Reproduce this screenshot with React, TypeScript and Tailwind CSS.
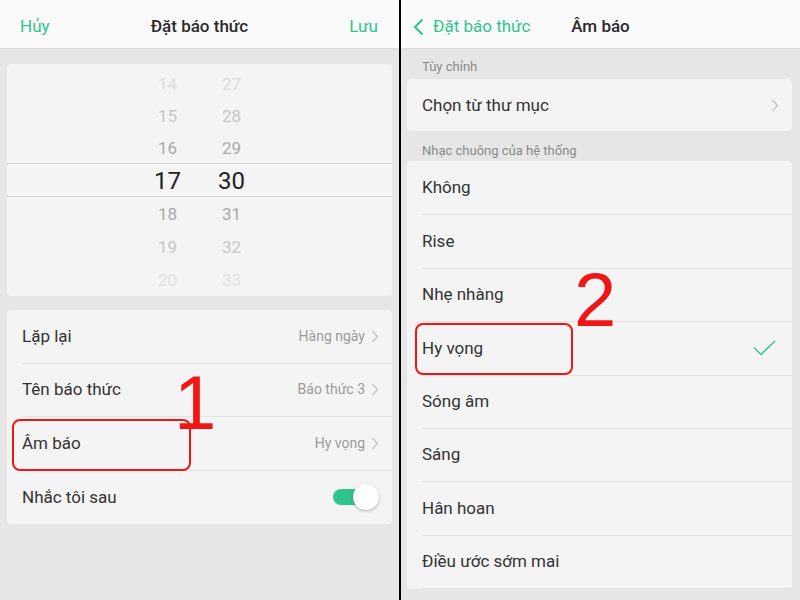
import React from 'react';

const GREEN = '#2fc48e';

const hours = [
  { h: '14', m: '27', c: 'h-[32px] pt-[3px] text-[17px] text-[#dcdcdc]' },
  { h: '15', m: '28', c: 'h-[32px] pt-[3px] text-[17px] text-[#c6c6c6]' },
  { h: '16', m: '29', c: 'h-[32px] pt-[3px] text-[17px] text-[#a9a9a9]' },
  { h: '17', m: '30', c: 'h-[34px] pt-[1px] text-[24px] text-[#222222] border-y border-[#d6d6d6]' },
  { h: '18', m: '31', c: 'h-[33px] pt-[3px] text-[17px] text-[#a9a9a9]' },
  { h: '19', m: '32', c: 'h-[33px] pt-[3px] text-[17px] text-[#c8c8c8]' },
  { h: '20', m: '33', c: 'h-[33px] pt-[3px] text-[17px] text-[#e2e2e2]' },
];

const settings = [
  { label: 'Lặp lại', value: 'Hàng ngày' },
  { label: 'Tên báo thức', value: 'Báo thức 3' },
  { label: 'Âm báo', value: 'Hy vọng' },
];

const tones = ['Không', 'Rise', 'Nhẹ nhàng', 'Hy vọng', 'Sóng âm', 'Sáng', 'Hân hoan', 'Điều ước sớm mai'];

function Chevron({ className = '' }: { className?: string }) {
  return (
    <svg width="8" height="13" viewBox="0 0 8 13" className={className}>
      <polyline points="1.5,1 6.5,6.5 1.5,12" fill="none" stroke="#c4c4c4" strokeWidth="1.3" />
    </svg>
  );
}

function Toggle() {
  return (
    <div className="relative w-[46px] h-[26px]">
      <div className="absolute left-0 top-[5px] w-[36px] h-[16px] rounded-full" style={{ background: GREEN }} />
      <div className="absolute right-0 top-0 w-[26px] h-[26px] rounded-full bg-white shadow-[0_1px_3px_rgba(0,0,0,0.3)]" />
    </div>
  );
}

function LeftPanel() {
  return (
    <div className="w-[399px] h-full flex flex-col bg-[#e6e6e6]">
      <div className="h-[49px] shrink-0 bg-[#fafafa] border-b border-[#dadada] flex items-center justify-between pl-[20px] pr-[21px] pt-[5px] text-[17px]">
        <span style={{ color: GREEN }}>Hủy</span>
        <span className="font-medium text-[#2a2a2a]">Đặt báo thức</span>
        <span style={{ color: GREEN }}>Lưu</span>
      </div>
      <div className="flex flex-col px-[7px] pt-[15px]">
        <div className="h-[232px] rounded-[4px] bg-[#f4f4f4] pt-[3px] overflow-hidden">
          {hours.map((r) => (
            <div key={r.h} className={'flex justify-center items-center ' + r.c}>
              <span className="w-16 text-center">{r.h}</span>
              <span className="w-16 text-center">{r.m}</span>
            </div>
          ))}
        </div>
        <div className="mt-[14px] rounded-[4px] bg-[#f4f4f4] pl-[15px]">
          {settings.map((s) => (
            <div key={s.label} className="h-[53.5px] flex items-center justify-between border-b border-[#e2e2e2] pr-[13px]">
              <span className="text-[17px] text-[#333]">{s.label}</span>
              <span className="flex items-center gap-[6px] text-[14px] text-[#9b9b9b]">
                {s.value}
                <Chevron />
              </span>
            </div>
          ))}
          <div className="h-[53.5px] flex items-center justify-between pr-[13px]">
            <span className="text-[17px] text-[#333]">Nhắc tôi sau</span>
            <Toggle />
          </div>
        </div>
      </div>
    </div>
  );
}

function RightPanel() {
  return (
    <div className="flex-1 h-full flex flex-col bg-[#e6e6e6]">
      <div className="h-[49px] shrink-0 bg-[#fafafa] border-b border-[#dadada] grid grid-cols-[1fr_auto_1fr] items-center pt-[5px] text-[17px]">
        <div className="flex items-center pl-[12px] gap-[9px]" style={{ color: GREEN }}>
          <svg width="11" height="18" viewBox="0 0 11 18">
            <polyline points="9.5,1.5 2,9 9.5,16.5" fill="none" stroke={GREEN} strokeWidth="2" />
          </svg>
          <span>Đặt báo thức</span>
        </div>
        <span className="font-medium text-[#2a2a2a]">Âm báo</span>
        <div />
      </div>
      <div className="flex flex-col pl-[6px] pr-[8px]">
        <div className="h-[30px] pl-[15px] pt-[11px] text-[13px] text-[#8a8a8a] leading-none">Tùy chỉnh</div>
        <div className="h-[52px] rounded-[4px] bg-[#f4f4f4] flex items-center justify-between pl-[15px] pr-[13px] pt-[1px]">
          <span className="text-[17px] text-[#333]">Chọn từ thư mục</span>
          <Chevron />
        </div>
        <div className="h-[30px] pl-[15px] pt-[13px] text-[13px] text-[#8a8a8a] leading-none">Nhạc chuông của hệ thống</div>
        <div className="rounded-[4px] bg-[#f4f4f4] pl-[15px] pt-[1px]">
          {tones.map((t) => (
            <div key={t} className="h-[53.4px] flex items-center justify-between border-b border-[#e2e2e2] pr-[16px]">
              <span className="text-[17px] text-[#333]">{t}</span>
              {t === 'Hy vọng' && (
                <svg width="23" height="16" viewBox="0 0 23 16">
                  <polyline points="1,7.5 8,14.5 22,1" fill="none" stroke={GREEN} strokeWidth="1.4" />
                </svg>
              )}
            </div>
          ))}
        </div>
      </div>
    </div>
  );
}

export default function App() {
  return (
    <div
      className="relative w-[800px] h-[600px] flex overflow-hidden bg-black"
      style={{ fontFamily: 'Roboto, "Noto Sans", sans-serif' }}
    >
      <LeftPanel />
      <div className="w-[2px] h-full bg-black" />
      <RightPanel />

      {/* annotations */}
      <div className="absolute left-[12px] top-[419px] w-[179px] h-[52px] border-2 border-[#f01616] rounded-[8px]" />
      <div
        className="absolute left-[174px] top-[365px] text-[76px] leading-none text-[#f01616]"
        style={{ fontFamily: '"Liberation Sans", Arial, sans-serif' }}
      >
        1
      </div>
      <div className="absolute left-[415px] top-[323px] w-[158px] h-[52px] border-2 border-[#f01616] rounded-[8px]" />
      <div
        className="absolute left-[574px] top-[262px] text-[76px] leading-none text-[#f01616]"
        style={{ fontFamily: '"Liberation Sans", Arial, sans-serif' }}
      >
        2
      </div>
    </div>
  );
}
